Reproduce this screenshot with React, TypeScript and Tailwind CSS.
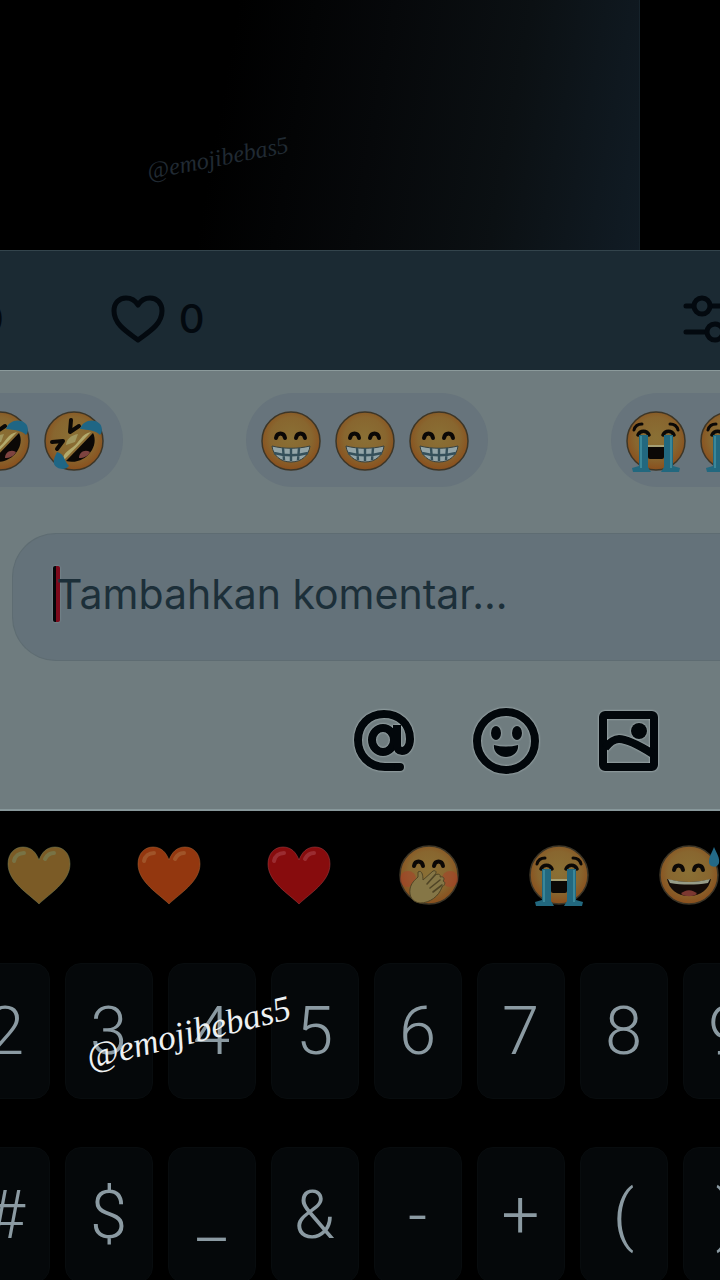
import type { ReactNode } from 'react';

function EmojiSvg({ children }: { children: ReactNode }) {
  return (
    <svg viewBox="0 0 60 60" className="h-[60px] w-[60px] shrink-0 overflow-visible" aria-hidden="true">
      {children}
    </svg>
  );
}

function Face() {
  return <circle cx="30" cy="30" r="29" fill="url(#face)" stroke="#3d3627" strokeWidth="1.5" />;
}

function HappyEyes({ y }: { y: number }) {
  return (
    <g transform={`translate(0 ${y})`} fill="none" stroke="#0b0806" strokeWidth="4" strokeLinecap="round">
      <path d="M15 3c1-6 8-6 9 0" />
      <path d="M35 3c1-6 8-6 9 0" />
    </g>
  );
}

function Grin() {
  return (
    <EmojiSvg>
      <Face />
      <HappyEyes y={24} />
      <path d="M11 35c12 3 26 3 38 0-1 9-8 16-19 16S12 44 11 35z" fill="#93a5a8" stroke="#37413f" strokeWidth="1" />
      <path d="M13 42c11 3 23 3 34 0M22 37l1 12M30 37v13M38 37l-1 12" fill="none" stroke="#35505a" strokeWidth="2.4" />
    </EmojiSvg>
  );
}

function Rofl() {
  return (
    <EmojiSvg>
      <Face />
      <path d="M27 9l-1 12 9-6M8 31l11-1-6 8" fill="none" stroke="#0b0806" strokeWidth="4" strokeLinejoin="round" strokeLinecap="round" />
      <path d="M49 22c7 14-9 33-27 28z" fill="#0b0806" />
      <path d="M47 21L20 49c-2-5 2-8 9-13 7-5 8-13 18-15z" fill="#b3aa6c" />
      <path d="M22 34c0-5 5-10 12-11l-3 8z" fill="#a0965e" />
      <path d="M35 47c0-6 6-9 11-6-2 4-6 6-11 6z" fill="#7d4340" />
      <path d="M36 18c3-9 14-11 20-5 3 4 2 9 0 11-5-5-12-5-20-6z" fill="#1f6685" />
      <path d="M13 41c8 2 7 9 12 14-4 5-13 3-15-2-1-4 1-8 3-12z" fill="#1f6685" />
    </EmojiSvg>
  );
}

function Sob() {
  return (
    <EmojiSvg>
      <Face />
      <path d="M8 19c1-4 4-6 8-6M52 19c-1-4-4-6-8-6" fill="none" stroke="#0b0806" strokeWidth="3" strokeLinecap="round" />
      <path d="M12 24c2-5 9-5 11 0M37 24c2-5 9-5 11 0" fill="none" stroke="#0b0806" strokeWidth="3.5" strokeLinecap="round" />
      <path d="M13 24h9v32l3 5H7l-1-4 7-2zM38 24h9v31l7 2-1 4H35l3-5z" fill="#22687f" />
      <path d="M15 25v32M45 25v32" stroke="#3a8799" strokeWidth="2" />
      <rect x="22" y="34" width="16" height="14" rx="2" fill="#0b0806" />
      <path d="M22 35h16" stroke="#a59f74" strokeWidth="2" />
    </EmojiSvg>
  );
}

function Giggle() {
  return (
    <EmojiSvg>
      <Face />
      <circle cx="9" cy="34" r="8" fill="#a8402a" opacity=".55" />
      <circle cx="51" cy="34" r="8" fill="#a8402a" opacity=".55" />
      <HappyEyes y={18} />
      <path
        d="M19 27c3-2 5 1 5 8l10-9c3-1 4 1 2 4 4-2 6 0 5 2 4-1 5 2 3 4 3 1 2 4-1 6-3 9-12 16-22 16-8-1-11-7-10-14 1-6 5-9 8-12z"
        fill="#857646"
        stroke="#4f4425"
        strokeWidth="1"
      />
      <path d="M28 39l8-9M31 43l10-8M34 47l9-7" stroke="#4f4425" strokeWidth="1.6" strokeLinecap="round" />
    </EmojiSvg>
  );
}

function SweatSmile() {
  return (
    <EmojiSvg>
      <Face />
      <HappyEyes y={22} />
      <path d="M8 34c14 4 30 4 44 0-2 10-10 17-22 17S10 44 8 34z" fill="#120a07" />
      <path d="M9 34c14 4 28 4 42 0l-2 4c-12 2-26 2-38 0z" fill="#979c88" />
      <path d="M22 49c4-5 12-5 16 0-5 3-11 3-16 0z" fill="#7c3831" />
      <path d="M55 2c3 7 6 11 5 16s-10 5-10-1 3-9 5-15z" fill="#236987" />
    </EmojiSvg>
  );
}

function Heart({ fill, shine }: { fill: string; shine: string }) {
  return (
    <EmojiSvg>
      <path
        d="M30 59C20 49-1 37-1 19-1 8 6 2 14 2c8 0 13 5 16 13C33 7 38 2 46 2c8 0 15 6 15 17 0 18-21 30-31 40z"
        fill={fill}
        stroke={shine}
        strokeOpacity=".5"
      />
      <path d="M5 16c1-5 5-8 10-8M36 14c2-4 5-6 9-6" fill="none" stroke={shine} strokeWidth="4" strokeLinecap="round" opacity=".6" />
    </EmojiSvg>
  );
}

const quickReplies = [
  { label: 'rofl', Emoji: Rofl },
  { label: 'grin', Emoji: Grin },
  { label: 'sob', Emoji: Sob },
];

const recentEmojis = [
  { label: 'yellow heart', icon: <Heart fill="#7b5b26" shine="#77835a" /> },
  { label: 'orange heart', icon: <Heart fill="#93370f" shine="#a8683a" /> },
  { label: 'red heart', icon: <Heart fill="#870c0d" shine="#a8434a" /> },
  { label: 'giggle', icon: <Giggle /> },
  { label: 'sob', icon: <Sob /> },
  { label: 'sweat smile', icon: <SweatSmile /> },
];

const keyRows = [
  ['2', '3', '4', '5', '6', '7', '8', '9'],
  ['#', '$', '_', '&', '-', '+', '(', ')'],
];

function PhotoPreview() {
  return (
    <section className="bg-black pr-20">
      <div className="h-[250px] border-r border-[#16232b] bg-[linear-gradient(100deg,#000_35%,#06080a_58%,#0b1013_78%,#111c25_100%)] pl-[146px] pt-[142px]">
        <p className="w-fit -rotate-11 font-['Liberation_Serif',serif] text-2xl italic text-[#202a33]">@emojibebas5</p>
      </div>
    </section>
  );
}

function StatsBar() {
  return (
    <div className="flex items-center overflow-hidden border-y border-t-[#33444c] border-b-[#8b9a9b] bg-[#1b2a33] pb-5 pt-[37px] font-['Inter',sans-serif] text-[40px] font-medium leading-[62px] text-[#03090f]">
      <button type="button" aria-label="Comments" className="-ml-[22px]">
        0
      </button>
      <button type="button" aria-label="Like" className="ml-[107px] flex items-center gap-[14px]">
        <svg viewBox="0 0 54 50" className="h-[50px] w-[54px]" fill="none" stroke="currentColor" strokeWidth="5" strokeLinejoin="round">
          <path d="M27 46C18 39 3 31 3 17 3 9 8 4 15 4c5 0 9 2 12 7 3-5 7-7 12-7 7 0 12 5 12 13 0 14-15 22-24 29z" />
        </svg>
        <span>0</span>
      </button>
      <button type="button" aria-label="Filter" className="-mr-4 ml-auto">
        <svg viewBox="0 0 54 50" className="h-[50px] w-[54px]" fill="none" stroke="currentColor" strokeWidth="5" strokeLinecap="round">
          <path d="M4 12h6M30 12h20M4 38h20M44 38h6" />
          <circle cx="20" cy="12" r="8" />
          <circle cx="33" cy="38" r="8" />
        </svg>
      </button>
    </div>
  );
}

function CommentBox() {
  return (
    <section className="overflow-hidden border-b-2 border-[#87979a] bg-[#6f7c7f] pb-9 pt-[22px]">
      <div className="flex justify-center gap-[123px] pl-[14px]">
        {quickReplies.map(({ label, Emoji }) => (
          <button key={label} type="button" aria-label={label} className="flex shrink-0 gap-[14px] rounded-full bg-[#67747c] pb-4 pl-[15px] pr-[19px] pt-[18px]">
            <Emoji />
            <Emoji />
            <Emoji />
          </button>
        ))}
      </div>

      <div className="ml-3 mt-[46px] flex items-center rounded-l-[44px] border border-r-0 border-[#5e6c72] bg-[#64727a] pb-[38px] pl-10 pt-8">
        <span className="h-14 w-[7px] shrink-0 rounded-xs bg-[linear-gradient(90deg,#03070a_50%,#7c0a1c_50%)] shadow-[0_0_2px_#92a3a6]" />
        <input
          type="text"
          aria-label="Tambahkan komentar"
          placeholder="Tambahkan komentar..."
          className="-ml-1 w-full min-w-0 bg-transparent font-['Inter',sans-serif] text-[41px] leading-[56px] text-[#14242d] outline-none placeholder:text-[#1c2f39]"
        />
      </div>

      <div className="mt-12 flex justify-end gap-[58px] pr-[60px] text-[#02070b]">
        <button type="button" aria-label="Mention" className="drop-shadow-[0_0_1px_#c0cccd]">
          <svg viewBox="0 0 64 64" className="h-16 w-16" fill="none" stroke="currentColor" strokeWidth="8">
            <ellipse cx="31" cy="31" rx="11" ry="12" />
            <path d="M45 16v20c0 4 2 6 5 6 4 0 8-4 8-12C58 15 47 5 32 5S6 16 6 31s11 27 27 27h14" />
            <path d="M46 58h2" strokeLinecap="round" />
          </svg>
        </button>
        <button type="button" aria-label="Emoji" className="drop-shadow-[0_0_1px_#c0cccd]">
          <svg viewBox="0 0 64 64" className="h-16 w-16 overflow-visible" fill="currentColor">
            <circle cx="32" cy="32" r="29" fill="none" stroke="currentColor" strokeWidth="8" />
            <ellipse cx="22" cy="24" rx="5" ry="7" />
            <ellipse cx="43" cy="24" rx="5" ry="7" />
            <path d="M20 36c8 2 16 2 24 0 1 7-5 12-12 12s-13-5-12-12z" />
          </svg>
        </button>
        <button type="button" aria-label="Picture" className="drop-shadow-[0_0_1px_#c0cccd]">
          <svg viewBox="0 0 64 64" className="h-16 w-16" fill="none" stroke="currentColor" strokeWidth="8">
            <rect x="7" y="6" width="51" height="52" rx="2" />
            <circle cx="43" cy="22" r="8" fill="currentColor" stroke="none" />
            <path d="M9 39c4-5 8-9 14-9 8 0 18 5 34 15" />
          </svg>
        </button>
      </div>
    </section>
  );
}

function Keyboard() {
  return (
    <section className="relative pt-[34px]">
      <div className="flex justify-center gap-[70px] pl-2">
        {recentEmojis.map(({ label, icon }) => (
          <button key={label} type="button" aria-label={label} className="shrink-0">
            {icon}
          </button>
        ))}
      </div>
      <div className="mt-[58px] flex flex-col gap-12">
        {keyRows.map((row) => (
          <div key={row[0]} className="flex justify-center gap-[15px] pl-3">
            {row.map((key) => (
              <button
                key={key}
                type="button"
                className="w-[88px] shrink-0 rounded-2xl border border-[#080c0e] bg-[#05080a] font-['Roboto',sans-serif] text-[67px] font-light leading-[134px] text-[#8b9aa2]"
              >
                {key}
              </button>
            ))}
          </div>
        ))}
      </div>
      <p className="absolute left-[84px] top-[202px] -rotate-14 font-['Liberation_Serif',serif] text-[35px] leading-10 italic text-[#eef1f2]">
        @emojibebas5
      </p>
    </section>
  );
}

export default function App() {
  return (
    <main className="h-screen overflow-hidden bg-black">
      <svg className="absolute h-0 w-0" aria-hidden="true">
        <radialGradient id="face" cx="50%" cy="45%" r="55%">
          <stop offset="0%" stopColor="#8a7035" />
          <stop offset="65%" stopColor="#88662f" />
          <stop offset="100%" stopColor="#8a4f1d" />
        </radialGradient>
      </svg>
      <PhotoPreview />
      <StatsBar />
      <CommentBox />
      <Keyboard />
    </main>
  );
}
